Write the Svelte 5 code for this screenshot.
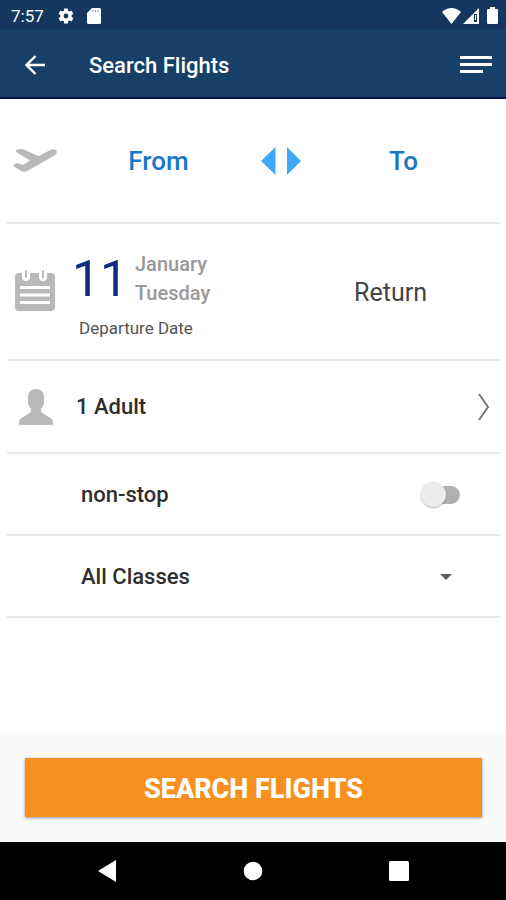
<script>
	const classes = ['All Classes', 'Economy', 'Business', 'First']

	let from = 'From'
	let to = 'To'
	let nonStop = false
	let cabin = classes[0]

	// swap origin and destination
	function swap() {
		const previous = from
		from = to
		to = previous
	}
</script>

<div class="screen">
	<div class="status">
		<span class="clock">7:57</span>
		<svg class="gear" width="18" height="18" viewBox="0 0 24 24">
			<path
				fill="#fff"
				d="M19.4 13a7.500 7.500 0 0 0 0-2l2.100-1.600a.5.5 0 0 0 .1-.7l-2-3.400a.5.5 0 0 0-.6-.2l-2.500 1a7.300 7.300 0 0 0-1.700-1L14.400 2.400a.5.5 0 0 0-.5-.4h-4a.5.5 0 0 0-.5.400L9.100 5.100a7.700 7.700 0 0 0-1.700 1l-2.500-1a.5.5 0 0 0-.6.200l-2 3.400a.5.5 0 0 0 .1.700L4.500 11a7.500 7.500 0 0 0 0 2l-2.100 1.600a.5.5 0 0 0-.1.700l2 3.400c.1.200.4.300.6.200l2.500-1a7.300 7.300 0 0 0 1.700 1l.4 2.700c0 .2.200.4.500.4h4c.2 0 .5-.2.500-.4l.4-2.700a7.700 7.700 0 0 0 1.700-1l2.500 1c.2.100.5 0 .6-.2l2-3.400a.5.5 0 0 0-.1-.7zM12 15.200a3.200 3.200 0 1 1 0-6.400 3.200 3.200 0 0 1 0 6.400z"
			/>
		</svg>
		<svg class="card" width="14" height="16" viewBox="0 0 14 16">
			<path fill="#fff" d="M5 0h7.500Q14 0 14 1.500v13q0 1.500-1.500 1.500h-11Q0 16 0 14.500V5z" />
			<path stroke="#15375f" stroke-opacity="0.500" d="M6 2v2M8.500 2v2M11 2v2" />
		</svg>
		<span class="spacer"></span>
		<svg width="19" height="16" viewBox="0 0 19 16">
			<path fill="#fff" d="M0 4Q9.500-4 19 4L9.500 16z" />
		</svg>
		<svg class="signal" width="16" height="16" viewBox="0 0 16 16">
			<path fill="#fff" d="M16 0v16H0z" />
			<path fill="#15375f" d="M11 6h3v8h-3z" />
			<path fill="#fff" d="M12 7h1v5h-1z" />
		</svg>
		<svg class="battery" width="11" height="17" viewBox="0 0 11 17">
			<path fill="#fff" d="M3 0h5v2h2q1 0 1 1v13q0 1-1 1H1q-1 0-1-1V3q0-1 1-1h2z" />
		</svg>
	</div>

	<header>
		<button class="back" aria-label="Back">
			<svg width="20" height="20" viewBox="0 0 20 20">
				<path d="M20 10H2M10.500 1L1.500 10l9 9" fill="none" stroke="#fff" stroke-width="2.400" />
			</svg>
		</button>
		<h1>Search Flights</h1>
		<button class="menu" aria-label="Menu">
			<svg width="32" height="21" viewBox="0 0 32 21">
				<path fill="#fff" d="M0 1h32v3H0zM0 8h32v3H0zM0 15h23v3H0z" />
			</svg>
		</button>
	</header>

	<main>
		<section class="row route">
			<svg width="44" height="24" viewBox="0 0 44 24">
				<path
					fill="#b9b9b9"
					d="M3 3Q2 1 4 .5L8 0q1-.2 2 .3L25.500 7 38 .8Q41.500-.8 43.300 1.500q1.500 2.800-1.800 5L15 21.500q-4 2.300-7.500.3L.5 17Q-.2 15.500 1.500 15l2.500-.8q1-.2 2 .4l4 1.400 7-4.500z"
				/>
			</svg>
			<button class="place">{from}</button>
			<button class="swap" aria-label="Swap" on:click={swap}>
				<svg width="40" height="28" viewBox="0 0 40 28">
					<path fill="#3ea9f5" d="M14.500 0v28L0 14zM26 0v28l14-14z" />
				</svg>
			</button>
			<button class="place">{to}</button>
		</section>

		<section class="row dates">
			<svg width="40" height="43" viewBox="0 0 40 43">
				<path
					fill="#b9b9b9"
					d="M4 3h3v4q0 4 4 4t4-4V3h9v4q0 4 4 4t4-4V3h4q4 0 4 4v30q0 4-4 4H4q-4 0-4-4V7q0-4 4-4z"
				/>
				<path stroke="#b9b9b9" stroke-width="2" stroke-linecap="round" d="M11 1v6M28 1v6" />
				<path stroke="#fff" stroke-width="3" d="M5 17.500h30M5 25h30M5 32.500h30" />
			</svg>
			<button class="departure">
				<span class="date">
					<span class="day">11</span>
					<span class="names">
						<span>January</span>
						<span>Tuesday</span>
					</span>
				</span>
				<span class="caption">Departure Date</span>
			</button>
			<button class="return">Return</button>
		</section>

		<button class="row travellers">
			<svg width="34" height="36" viewBox="0 0 34 36">
				<path
					fill="#b9b9b9"
					d="M17 0q8 0 8 7.500V13q0 4-3 6.500v2q0 1.500 1.500 2.500L32 29.500q2 1.500 2 3V36H0v-3.500q0-1.500 2-3L10.500 24q1.500-1 1.500-2.500v-2Q9 17 9 13V7.500Q9 0 17 0z"
				/>
			</svg>
			<span class="label">1 Adult</span>
			<svg width="12" height="28" viewBox="0 0 12 28">
				<path d="M1 1l9 13-9 13" fill="none" stroke="#777" stroke-width="2" />
			</svg>
		</button>

		<label class="row option">
			<span class="label">non-stop</span>
			<input class="switch" type="checkbox" bind:checked={nonStop} />
		</label>

		<div class="row option">
			<select aria-label="Class" bind:value={cabin}>
				{#each classes as item}
					<option>{item}</option>
				{/each}
			</select>
			<svg class="caret" width="12" height="6" viewBox="0 0 12 6">
				<path fill="#5f5f5f" d="M0 0h12L6 6z" />
			</svg>
		</div>
	</main>

	<footer>
		<button class="search">SEARCH FLIGHTS</button>
	</footer>

	<nav>
		<button aria-label="Back">
			<svg width="18" height="22" viewBox="0 0 18 22"><path fill="#fff" d="M18 0v22L0 11z" /></svg>
		</button>
		<button aria-label="Home">
			<svg width="20" height="20" viewBox="0 0 20 20"><circle cx="10" cy="10" r="9.300" fill="#fff" /></svg>
		</button>
		<button aria-label="Recent apps">
			<svg width="20" height="20" viewBox="0 0 20 20"><rect width="20" height="20" rx="1.500" fill="#fff" /></svg>
		</button>
	</nav>
</div>

<style>
	:global(body) {
		margin: 0;
		background: #fff;
	}

	.screen {
		min-height: 100vh;
		display: flex;
		flex-direction: column;
		font-family: Roboto, 'Liberation Sans', sans-serif;
		color: #2e2e2e;
	}

	button {
		padding: 0;
		border: 0;
		background: none;
		font: inherit;
		color: inherit;
		cursor: pointer;
	}

	svg {
		display: block;
		flex: none;
	}

	.status {
		display: flex;
		align-items: center;
		box-sizing: border-box;
		height: 29px;
		padding: 2px 8px 0 11px;
		background: #15375f;
		color: #fff;
	}

	.clock {
		font-size: 17px;
	}

	.gear {
		margin-left: 13px;
	}

	.card {
		margin-left: 12px;
	}

	.spacer {
		flex: 1;
	}

	.signal {
		margin-left: 2px;
	}

	.battery {
		margin-left: 8px;
	}

	header {
		display: flex;
		align-items: center;
		box-sizing: border-box;
		height: 70px;
		padding: 4px 14px 0 25px;
		background: #173f68;
		border-bottom: 2px solid #07104f;
		color: #fff;
	}

	h1 {
		flex: 1;
		margin: 0 0 0 44px;
		font-size: 22px;
		font-weight: 500;
	}

	main {
		flex: 1;
		display: flex;
		flex-direction: column;
		padding: 0 6px 0 7px;
	}

	.row {
		display: flex;
		align-items: center;
		box-sizing: border-box;
		border-bottom: 2px solid #e8e8e8;
		text-align: left;
	}

	.label {
		flex: 1;
		font-size: 22px;
		font-weight: 500;
	}

	.route {
		height: 125px;
		padding: 0 15px 0 6px;
	}

	.place {
		flex: 1 0 0;
		margin-left: 20px;
		color: #1976c9;
		font-size: 26px;
		font-weight: 500;
	}

	.swap + .place {
		margin-left: 0;
	}

	.swap {
		display: flex;
		justify-content: center;
		width: 82px;
	}

	.dates {
		height: 137px;
		padding: 0 73px 0 8px;
	}

	.departure {
		flex: 1;
		margin-left: 17px;
		text-align: left;
	}

	.date {
		display: flex;
		align-items: center;
		margin-top: 4px;
	}

	.day {
		width: 63px;
		color: #0c2c84;
		font-size: 50px;
		font-weight: 400;
		line-height: 58px;
	}

	.names {
		display: flex;
		flex-direction: column;
		color: #999;
		font-size: 20px;
		font-weight: 500;
		line-height: 29px;
	}

	.caption {
		display: block;
		margin: 10px 0 0 7px;
		color: #555;
		font-size: 17px;
		line-height: 20px;
	}

	.return {
		padding-top: 2px;
		color: #444;
		font-size: 25px;
	}

	.travellers {
		height: 93px;
		padding: 0 10px 0 12px;
		border-bottom: 2px solid #e8e8e8;
	}

	.travellers .label {
		margin-left: 23px;
	}

	.option {
		height: 82px;
		padding: 1px 40px 0 74px;
	}

	.switch {
		appearance: none;
		position: relative;
		width: 40px;
		height: 28px;
		margin: 0;
	}

	.switch::before {
		content: '';
		position: absolute;
		top: 5px;
		right: 0;
		width: 34px;
		height: 18px;
		border-radius: 9px;
		background: #b0b0b0;
	}

	.switch::after {
		content: '';
		position: absolute;
		top: 1px;
		left: 1px;
		width: 25px;
		height: 25px;
		border-radius: 50%;
		background: #ececec;
		box-shadow: 0 1px 2px rgba(0, 0, 0, 0.3);
	}

	.switch:checked::after {
		left: 15px;
	}

	select {
		flex: 1;
		appearance: none;
		padding: 0;
		border: 0;
		background: none;
		color: inherit;
		font: 500 22px Roboto, 'Liberation Sans', sans-serif;
	}

	.caret {
		margin-right: 8px;
		pointer-events: none;
	}

	footer {
		padding: 26px 24px 25px 25px;
		background: #fafafa;
	}

	.search {
		width: 100%;
		height: 59px;
		padding-top: 2px;
		background: #f7901e;
		box-shadow: 0 1px 3px rgba(0, 0, 0, 0.4);
		color: #fff;
		font-size: 27px;
		font-weight: 800;
	}

	nav {
		display: flex;
		height: 58px;
		padding: 0 34px;
		background: #000;
	}

	nav button {
		flex: 1;
		display: flex;
		align-items: center;
		justify-content: center;
	}
</style>
